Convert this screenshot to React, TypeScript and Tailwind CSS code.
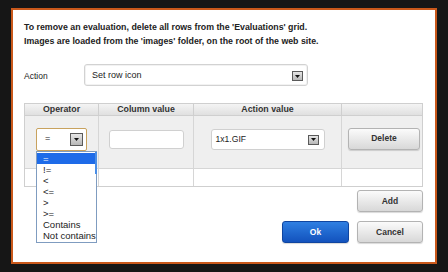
import React from "react";

const operators = ["=", "!=", "<", "<=", ">", ">=", "Contains", "Not contains"];

function Arrow({ big }: { big?: boolean }) {
  return (
    <span
      className={
        big
          ? "w-[13px] h-[13px] flex items-center justify-center border border-[#5a5a5a] bg-linear-to-b from-[#e6e6e6] to-[#b8b8b8]"
          : "w-[11px] h-[10px] flex items-center justify-center border border-[#5a5a5a] bg-linear-to-b from-[#e6e6e6] to-[#b8b8b8]"
      }
    >
      <svg width="5" height="3" viewBox="0 0 5 3">
        <path d="M0 0h5L2.5 3z" fill="#111" />
      </svg>
    </span>
  );
}

function Button({ label, primary, className }: { label: string; primary?: boolean; className?: string }) {
  return (
    <button
      className={
        (primary
          ? "bg-linear-to-b from-[#2f7fe2] to-[#1352bd] border-[#0f45a0] text-white "
          : "bg-linear-to-b from-[#fbfbfb] to-[#d8d8d8] border-[#b3b3b3] text-[#333] ") +
        "h-[22px] border rounded-[3px] text-[8.5px] font-bold shadow-[0_1px_1px_rgba(0,0,0,0.15)] " +
        (className ?? "")
      }
    >
      {label}
    </button>
  );
}

export default function App() {
  return (
    <div className="w-[448px] h-[272px] bg-[#161616] pt-[8px] pl-[11px] font-['Liberation_Sans',Arial,sans-serif] text-[#222]">
      <div className="w-[426px] h-[256px] border-2 border-[#c9581b] bg-white pl-[11px] pr-[12px] pt-[10px] flex flex-col">
        {/* Intro */}
        <div className="text-[8.8px] font-bold leading-[14px]">
          <div>To remove an evaluation, delete all rows from the 'Evaluations' grid.</div>
          <div>Images are loaded from the 'images' folder, on the root of the web site.</div>
        </div>

        {/* Action */}
        <div className="mt-[16px] flex items-center h-[22px]">
          <span className="w-[60px] text-[8.5px] pt-[3px]">Action</span>
          <div className="w-[224px] h-[22px] rounded-[3px] border border-[#d2d2d2] shadow-[inset_0_0_0_1px_#f2f2f2] flex items-center justify-between pl-[7px] pr-[4px] pt-[2px]">
            <span className="text-[9px]">Set row icon</span>
            <Arrow />
          </div>
        </div>

        {/* Grid */}
        <div className="mt-[17px] w-[399px] border border-[#cfcfcf]">
          <div className="grid grid-cols-[73px_95px_148px_81px] h-[12px] border-b border-[#cfcfcf] bg-linear-to-b from-[#f4f4f4] to-[#e0e0e0] text-[8.8px] font-bold text-[#333] leading-[11px] text-center">
            <div>Operator</div>
            <div className="border-l border-[#cfcfcf]">Column value</div>
            <div className="border-l border-[#cfcfcf]">Action value</div>
            <div className="border-l border-[#cfcfcf]"></div>
          </div>
          <div className="grid grid-cols-[73px_95px_148px_81px] h-[53px] border-b border-[#d6d6d6] bg-[#efefef]">
            <div className="flex items-center justify-center pb-[6px]">
              <div className="relative">
                <div className="w-[51px] h-[23px] border border-[#c8a25e] rounded-[2px] bg-white flex items-center justify-between pl-[8px] pr-[3px]">
                  <span className="text-[9px]">=</span>
                  <Arrow big />
                </div>
                <div className="absolute top-full left-0 w-[61px] border border-[#7f9cc0] bg-white py-[1px] z-10">
                  {operators.map((op, i) => (
                    <div
                      key={op}
                      className={
                        i === 0
                          ? "h-[11px] leading-[11px] pl-[6px] text-[9.5px] bg-[#1e6be8] text-white"
                          : "h-[11px] leading-[11px] pl-[6px] text-[9.5px] text-[#222]"
                      }
                    >
                      {op}
                    </div>
                  ))}
                  <div className="absolute right-[-1px] top-0 w-[2px] h-[22px] bg-[#4a8ee6]" />
                </div>
              </div>
            </div>
            <div className="border-l border-[#d6d6d6] flex items-center justify-center pb-[6px]">
              <div className="w-[75px] h-[19px] border border-[#d0d0d0] rounded-[3px] bg-white" />
            </div>
            <div className="border-l border-[#d6d6d6] flex items-center justify-center pb-[6px]">
              <div className="w-[114px] h-[21px] border border-[#d0d0d0] rounded-[3px] bg-white flex items-center justify-between pl-[4px] pr-[5px] pt-[1px]">
                <span className="text-[8.6px]">1x1.GIF</span>
                <Arrow />
              </div>
            </div>
            <div className="border-l border-[#d6d6d6] flex items-center justify-center pl-[4px] pb-[7px]">
              <Button label="Delete" className="w-[72px] h-[21px]" />
            </div>
          </div>
          <div className="grid grid-cols-[73px_95px_148px_81px] h-[17px]">
            <div></div>
            <div className="border-l border-[#d6d6d6]"></div>
            <div className="border-l border-[#d6d6d6]"></div>
            <div className="border-l border-[#d6d6d6]"></div>
          </div>
        </div>

        {/* Buttons */}
        <div className="mt-[3px] flex justify-end">
          <Button label="Add" className="w-[66px]" />
        </div>
        <div className="mt-[9px] flex justify-end gap-[8px]">
          <Button label="Ok" primary className="w-[67px]" />
          <Button label="Cancel" className="w-[66px]" />
        </div>
      </div>
    </div>
  );
}
